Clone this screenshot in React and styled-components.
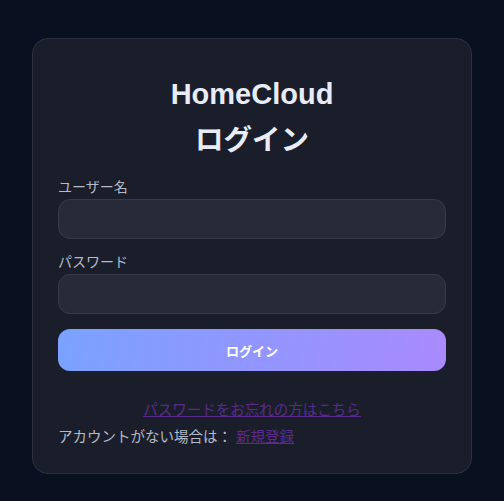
import React from 'react';
import styled, { createGlobalStyle } from 'styled-components';

const GlobalStyle = createGlobalStyle`
  html, body {
    margin: 0;
    padding: 0;
    background: #0b1020;
  }
  body {
    font-family: "Liberation Sans", "Noto Sans CJK JP", sans-serif;
    color: #e5e7eb;
  }
`;

const Page = styled.div`
  min-height: 501px;
  display: flex;
  justify-content: center;
  align-items: flex-start;
  padding-top: 38px;
  box-sizing: border-box;
`;

const Card = styled.div`
  width: 440px;
  box-sizing: border-box;
  background: #1a1e2b;
  border: 1px solid #2c3140;
  border-radius: 16px;
  padding: 32px 25px 26px;
`;

const Title = styled.h1`
  margin: 0;
  text-align: center;
  font-size: ${p => p.size}px;
  font-weight: 700;
  color: #e8ecf7;
  line-height: 46px;
`;

const Form = styled.form`
  display: flex;
  flex-direction: column;
  margin-top: 14px;
`;

const Label = styled.label`
  font-size: 14px;
  color: #b4bac8;
  margin-bottom: 2px;
  line-height: 20px;
`;

const Input = styled.input`
  height: 40px;
  box-sizing: border-box;
  background: #272a38;
  border: 1px solid #363a4a;
  border-radius: 12px;
  margin-bottom: 13px;
  color: #e5e7eb;
  outline: none;
`;

const Submit = styled.button`
  height: 42px;
  margin-top: 2px;
  border: none;
  border-radius: 12px;
  background: linear-gradient(100deg, #7aa2ff 0%, #a98afd 100%);
  color: #fff;
  font-family: inherit;
  font-weight: 700;
  font-size: 13px;
`;

const Links = styled.div`
  margin-top: 29px;
  font-size: 14.5px;
  color: #b4bac8;
`;

const Center = styled.div`
  text-align: center;
  line-height: 20px;
`;

const Row = styled.div`
  line-height: 20px;
  margin-top: 7px;
`;

const Link = styled.a`
  color: #5a2a8c;
  text-decoration: underline;
`;

export default function App() {
  return (
    <Page>
      <GlobalStyle />
      <Card>
        <Title size={29}>HomeCloud</Title>
        <Title size={28.5}>ログイン</Title>
        <Form onSubmit={e => e.preventDefault()}>
          <Label>ユーザー名</Label>
          <Input type="text" />
          <Label>パスワード</Label>
          <Input type="password" />
          <Submit type="submit">ログイン</Submit>
        </Form>
        <Links>
          <Center>
            <Link href="#">パスワードをお忘れの方はこちら</Link>
          </Center>
          <Row>
            アカウントがない場合は： <Link href="#">新規登録</Link>
          </Row>
        </Links>
      </Card>
    </Page>
  );
}
